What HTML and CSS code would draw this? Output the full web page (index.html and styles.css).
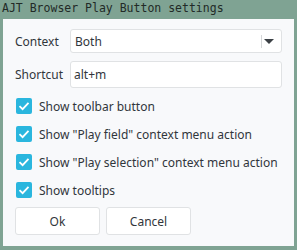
FILE: index.html
```html
<!DOCTYPE html>
<html lang="en">
<head>
    <meta charset="UTF-8">
    <title>AJT Browser Play Button settings</title>
    <link rel="stylesheet" href="styles.css">
</head>
<body>
    <div class="titlebar">AJT Browser Play Button settings</div>
    <div class="dialog">
        <div class="form-grid">
            <label class="field-label">Context</label>
            <div class="combo">
                <span class="combo-value">Both</span>
                <span class="combo-sep"></span>
                <span class="combo-arrow"></span>
            </div>
            <label class="field-label">Shortcut</label>
            <div class="line-edit">alt+m</div>
        </div>

        <div class="checks">
            <div class="check-row"><span class="box"><svg viewBox="0 0 16 16"><path d="M3.5 8.2 L6.6 11.2 L12.5 4.8"/></svg></span>Show toolbar button</div>
            <div class="check-row"><span class="box"><svg viewBox="0 0 16 16"><path d="M3.5 8.2 L6.6 11.2 L12.5 4.8"/></svg></span>Show "Play field" context menu action</div>
            <div class="check-row"><span class="box"><svg viewBox="0 0 16 16"><path d="M3.5 8.2 L6.6 11.2 L12.5 4.8"/></svg></span>Show "Play selection" context menu action</div>
            <div class="check-row"><span class="box"><svg viewBox="0 0 16 16"><path d="M3.5 8.2 L6.6 11.2 L12.5 4.8"/></svg></span>Show tooltips</div>
        </div>

        <div class="buttons">
            <button>Ok</button>
            <button>Cancel</button>
        </div>
    </div>
</body>
</html>
```

FILE: styles.css
```css
:root {
    --desk-color: #7fa393;
    --panel-color: #f8f9fb;
    --text-color: #31363b;
    --border-color: #e0e2e4;
    --check-color: #2ab6de;
}

* {
    box-sizing: border-box;
    margin: 0;
    padding: 0;
}

body {
    background-color: var(--desk-color);
    font-family: 'Noto Sans', sans-serif;
    font-size: 12px;
    color: var(--text-color);
    width: 297px;
    height: 250px;
    overflow: hidden;
}

.titlebar {
    height: 19px;
    padding-left: 2px;
    font-family: 'DejaVu Sans Mono', monospace;
    font-size: 11.5px;
    line-height: 17px;
    color: #222a27;
}

.dialog {
    margin: 0 3px;
    height: 227px;
    background-color: var(--panel-color);
    padding: 10px 12px 11px 12px;
}

.form-grid {
    display: grid;
    grid-template-columns: 49px 1fr;
    column-gap: 6px;
    row-gap: 8px;
    align-items: center;
}

.field-label {
    white-space: nowrap;
}

.combo, .line-edit {
    background: white;
    border: 1px solid var(--border-color);
    border-radius: 3px;
    display: flex;
    align-items: center;
}

.combo {
    height: 24px;
    padding-left: 4px;
}

.combo-value {
    flex: 1;
}

.combo-sep {
    width: 1px;
    height: 13px;
    background: #d5d7d9;
    margin-right: 2px;
}

.combo-arrow {
    width: 0;
    height: 0;
    border-left: 5px solid transparent;
    border-right: 5px solid transparent;
    border-top: 5px solid #3b4045;
    margin-right: 7px;
}

.line-edit {
    height: 27px;
    padding-left: 3px;
}

.checks {
    margin-top: 4px;
    margin-left: 1px;
}

.check-row {
    height: 28px;
    display: flex;
    align-items: center;
    gap: 7px;
    white-space: nowrap;
}

.box {
    width: 16px;
    height: 16px;
    border-radius: 2px;
    background: var(--check-color);
    display: flex;
}

.box svg {
    width: 16px;
    height: 16px;
    fill: none;
    stroke: white;
    stroke-width: 1.8;
}

.buttons {
    display: flex;
    gap: 6px;
    margin-top: 3px;
}

button {
    width: 85px;
    height: 28px;
    background: white;
    border: 1px solid var(--border-color);
    border-radius: 3px;
    font-family: 'Noto Sans', sans-serif;
    font-size: 12px;
    color: var(--text-color);
}
```
